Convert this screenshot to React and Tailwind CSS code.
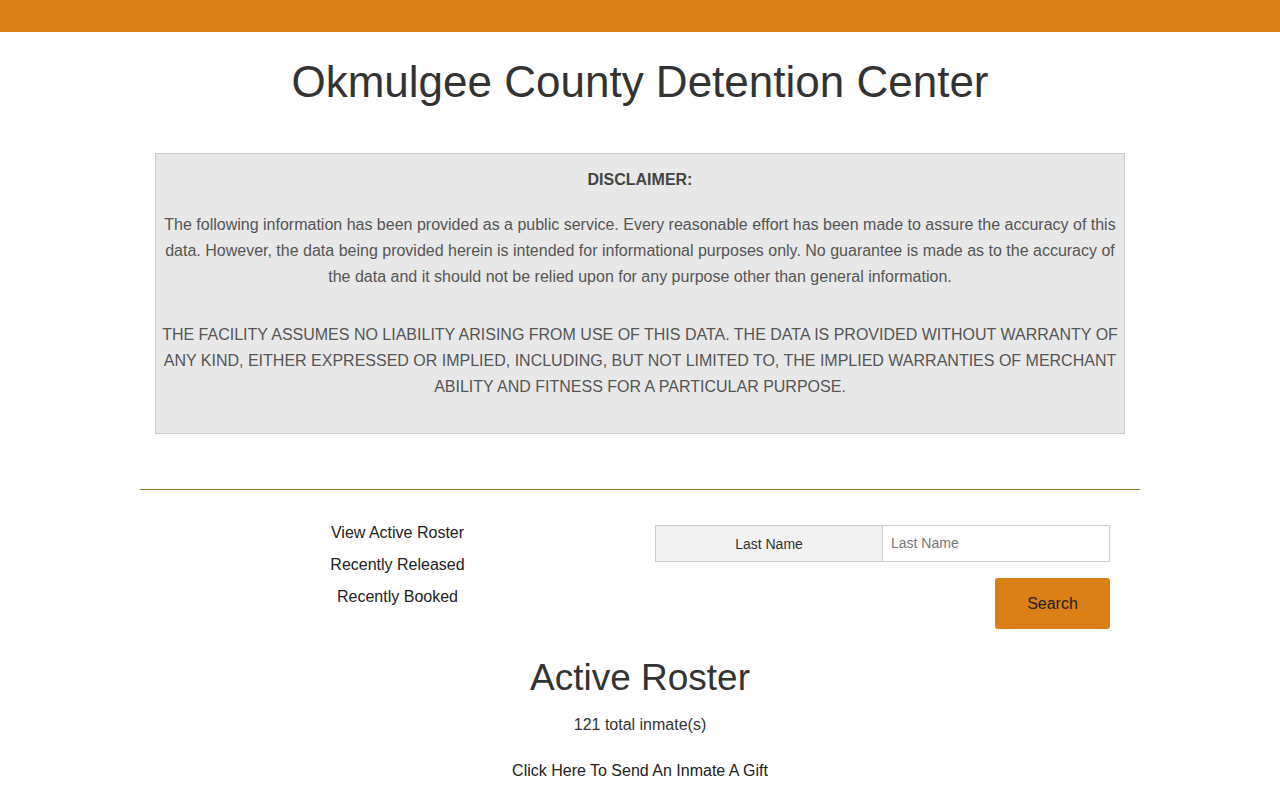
export default function App() {
  return (
    <div className="min-h-[800px] bg-white font-['Liberation_Sans',Arial,sans-serif] text-[#333]">
      <div className="h-8 bg-[#db7f17]" />
      <div className="mx-auto w-[1000px]">
        <h1 className="mt-[22px] text-center text-[44px] leading-[56px] text-[#333]">
          Okmulgee County Detention Center
        </h1>
        <div className="mx-[15px] mt-[43px] border border-[#cccccc] bg-[#e8e8e8] px-[5px] pb-[33px] pt-[13px] text-center text-[16px] leading-[26px] text-[#555]">
          <p className="font-bold text-[#444]">DISCLAIMER:</p>
          <p className="mt-[19px]">
            The following information has been provided as a public service. Every reasonable effort has been made to assure the accuracy of this data. However, the data being provided herein is intended for informational purposes only. No guarantee is made as to the accuracy of the data and it should not be relied upon for any purpose other than general information.
          </p>
          <p className="mt-[32px]">
            THE FACILITY ASSUMES NO LIABILITY ARISING FROM USE OF THIS DATA. THE DATA IS PROVIDED WITHOUT WARRANTY OF ANY KIND, EITHER EXPRESSED OR IMPLIED, INCLUDING, BUT NOT LIMITED TO, THE IMPLIED WARRANTIES OF MERCHANT ABILITY AND FITNESS FOR A PARTICULAR PURPOSE.
          </p>
        </div>
        <div className="mt-[55px] h-px bg-[#9c7a32]" />
        <div className="mt-[27px] flex items-start">
          <div className="flex w-[500px] flex-col items-center pl-[15px] text-[16px] leading-[32px] text-[#222]">
            <a className="cursor-pointer">View Active Roster</a>
            <a className="cursor-pointer">Recently Released</a>
            <a className="cursor-pointer">Recently Booked</a>
          </div>
          <div className="mt-[8px] flex w-[470px] flex-col items-end pl-[15px]">
            <div className="flex h-[37px] w-full">
              <div className="flex w-[228px] items-center justify-center border border-[#cccccc] bg-[#f2f2f2] pt-[2px] text-[14px] text-[#333]">
                Last Name
              </div>
              <input
                placeholder="Last Name"
                className="w-[227px] border border-l-0 border-[#cccccc] bg-white px-[8px] pb-[1px] text-[14px] text-[#333] outline-none placeholder:text-[#777]"
              />
            </div>
            <button className="mt-[16px] h-[51px] w-[115px] rounded-[3px] bg-[#db7f17] text-[16px] text-[#222]">
              Search
            </button>
          </div>
        </div>
        <div className="mt-[24px] text-center">
          <h2 className="text-[37px] leading-[50px] text-[#333]">Active Roster</h2>
          <p className="mt-[11px] text-[16px] leading-[22px] text-[#333]">121 total inmate(s)</p>
          <p className="mt-[24px] text-[16px] leading-[22px] text-[#222]">Click Here To Send An Inmate A Gift</p>
        </div>
      </div>
    </div>
  );
}
